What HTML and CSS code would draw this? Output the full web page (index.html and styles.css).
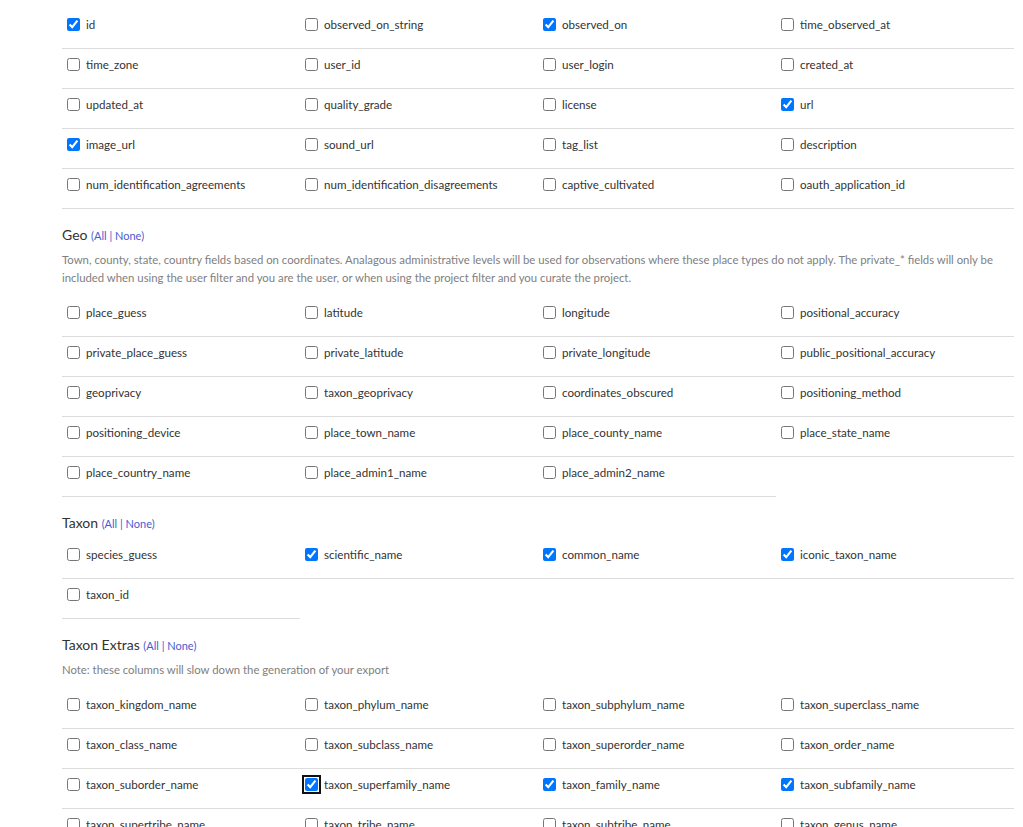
FILE: index.html
```html
<!DOCTYPE html>
<html>
<head>
<meta charset="utf-8">
<link rel="stylesheet" href="styles.css">
</head>
<body>
<div class="page">
  <div class="grid">
    <label class="cell"><input type="checkbox" checked><span>id</span></label>
    <label class="cell"><input type="checkbox"><span>observed_on_string</span></label>
    <label class="cell"><input type="checkbox" checked><span>observed_on</span></label>
    <label class="cell"><input type="checkbox"><span>time_observed_at</span></label>
    <label class="cell"><input type="checkbox"><span>time_zone</span></label>
    <label class="cell"><input type="checkbox"><span>user_id</span></label>
    <label class="cell"><input type="checkbox"><span>user_login</span></label>
    <label class="cell"><input type="checkbox"><span>created_at</span></label>
    <label class="cell"><input type="checkbox"><span>updated_at</span></label>
    <label class="cell"><input type="checkbox"><span>quality_grade</span></label>
    <label class="cell"><input type="checkbox"><span>license</span></label>
    <label class="cell"><input type="checkbox" checked><span>url</span></label>
    <label class="cell"><input type="checkbox" checked><span>image_url</span></label>
    <label class="cell"><input type="checkbox"><span>sound_url</span></label>
    <label class="cell"><input type="checkbox"><span>tag_list</span></label>
    <label class="cell"><input type="checkbox"><span>description</span></label>
    <label class="cell"><input type="checkbox"><span>num_identification_agreements</span></label>
    <label class="cell"><input type="checkbox"><span>num_identification_disagreements</span></label>
    <label class="cell"><input type="checkbox"><span>captive_cultivated</span></label>
    <label class="cell"><input type="checkbox"><span>oauth_application_id</span></label>
  </div>

  <div class="section">
    <h3 class="heading">Geo <span class="links">(<a href="#">All</a> | <a href="#">None</a>)</span></h3>
    <p class="desc">Town, county, state, country fields based on coordinates. Analagous administrative levels will be used for observations where these place types do not apply. The private_* fields will only be included when using the user filter and you are the user, or when using the project filter and you curate the project.</p>
    <div class="grid">
      <label class="cell"><input type="checkbox"><span>place_guess</span></label>
      <label class="cell"><input type="checkbox"><span>latitude</span></label>
      <label class="cell"><input type="checkbox"><span>longitude</span></label>
      <label class="cell"><input type="checkbox"><span>positional_accuracy</span></label>
      <label class="cell"><input type="checkbox"><span>private_place_guess</span></label>
      <label class="cell"><input type="checkbox"><span>private_latitude</span></label>
      <label class="cell"><input type="checkbox"><span>private_longitude</span></label>
      <label class="cell"><input type="checkbox"><span>public_positional_accuracy</span></label>
      <label class="cell"><input type="checkbox"><span>geoprivacy</span></label>
      <label class="cell"><input type="checkbox"><span>taxon_geoprivacy</span></label>
      <label class="cell"><input type="checkbox"><span>coordinates_obscured</span></label>
      <label class="cell"><input type="checkbox"><span>positioning_method</span></label>
      <label class="cell"><input type="checkbox"><span>positioning_device</span></label>
      <label class="cell"><input type="checkbox"><span>place_town_name</span></label>
      <label class="cell"><input type="checkbox"><span>place_county_name</span></label>
      <label class="cell"><input type="checkbox"><span>place_state_name</span></label>
      <label class="cell"><input type="checkbox"><span>place_country_name</span></label>
      <label class="cell"><input type="checkbox"><span>place_admin1_name</span></label>
      <label class="cell"><input type="checkbox"><span>place_admin2_name</span></label>
    </div>
  </div>

  <div class="section">
    <h3 class="heading">Taxon <span class="links">(<a href="#">All</a> | <a href="#">None</a>)</span></h3>
    <div class="grid">
      <label class="cell"><input type="checkbox"><span>species_guess</span></label>
      <label class="cell"><input type="checkbox" checked><span>scientific_name</span></label>
      <label class="cell"><input type="checkbox" checked><span>common_name</span></label>
      <label class="cell"><input type="checkbox" checked><span>iconic_taxon_name</span></label>
      <label class="cell"><input type="checkbox"><span>taxon_id</span></label>
    </div>
  </div>

  <div class="section">
    <h3 class="heading">Taxon Extras <span class="links">(<a href="#">All</a> | <a href="#">None</a>)</span></h3>
    <p class="desc">Note: these columns will slow down the generation of your export</p>
    <div class="grid">
      <label class="cell"><input type="checkbox"><span>taxon_kingdom_name</span></label>
      <label class="cell"><input type="checkbox"><span>taxon_phylum_name</span></label>
      <label class="cell"><input type="checkbox"><span>taxon_subphylum_name</span></label>
      <label class="cell"><input type="checkbox"><span>taxon_superclass_name</span></label>
      <label class="cell"><input type="checkbox"><span>taxon_class_name</span></label>
      <label class="cell"><input type="checkbox"><span>taxon_subclass_name</span></label>
      <label class="cell"><input type="checkbox"><span>taxon_superorder_name</span></label>
      <label class="cell"><input type="checkbox"><span>taxon_order_name</span></label>
      <label class="cell"><input type="checkbox"><span>taxon_suborder_name</span></label>
      <label class="cell"><input type="checkbox" class="focused" checked><span>taxon_superfamily_name</span></label>
      <label class="cell"><input type="checkbox" checked><span>taxon_family_name</span></label>
      <label class="cell"><input type="checkbox" checked><span>taxon_subfamily_name</span></label>
      <label class="cell"><input type="checkbox"><span>taxon_supertribe_name</span></label>
      <label class="cell"><input type="checkbox"><span>taxon_tribe_name</span></label>
      <label class="cell"><input type="checkbox"><span>taxon_subtribe_name</span></label>
      <label class="cell"><input type="checkbox"><span>taxon_genus_name</span></label>
    </div>
  </div>
</div>
</body>
</html>
```

FILE: styles.css
```css
html, body {
  margin: 0;
  padding: 0;
  background: #fff;
  overflow: hidden;
}
body {
  font-family: Lato, "Liberation Sans", Arial, sans-serif;
  color: #333;
  font-size: 11.6px;
}
.page {
  padding: 9px 0 0 62px;
  width: 952px;
}
.grid {
  display: grid;
  grid-template-columns: repeat(4, 238px);
}
.cell {
  display: flex;
  align-items: flex-start;
  height: 39px;
  box-sizing: content-box;
  border-bottom: 1px solid #ddd;
}
.cell input {
  width: 13px;
  height: 13px;
  margin: 9px 6px 0 5px;
  flex: none;
}
.cell span {
  line-height: 14px;
  margin-top: 9px;
}
.focused {
  outline: 2px solid #111;
  outline-offset: 1px;
  border-radius: 2px;
}
.section {
  margin-top: 16px;
}
.heading {
  margin: 0 0 5px;
  font-size: 14px;
  font-weight: normal;
  line-height: 20px;
}
.links {
  font-size: 11px;
  color: #4a5bd1;
}
.links a {
  color: #4a5bd1;
  text-decoration: none;
}
.desc {
  margin: 0 0 10px;
  font-size: 11.35px;
  line-height: 18px;
  color: #808080;
  width: 945px;
}
```
